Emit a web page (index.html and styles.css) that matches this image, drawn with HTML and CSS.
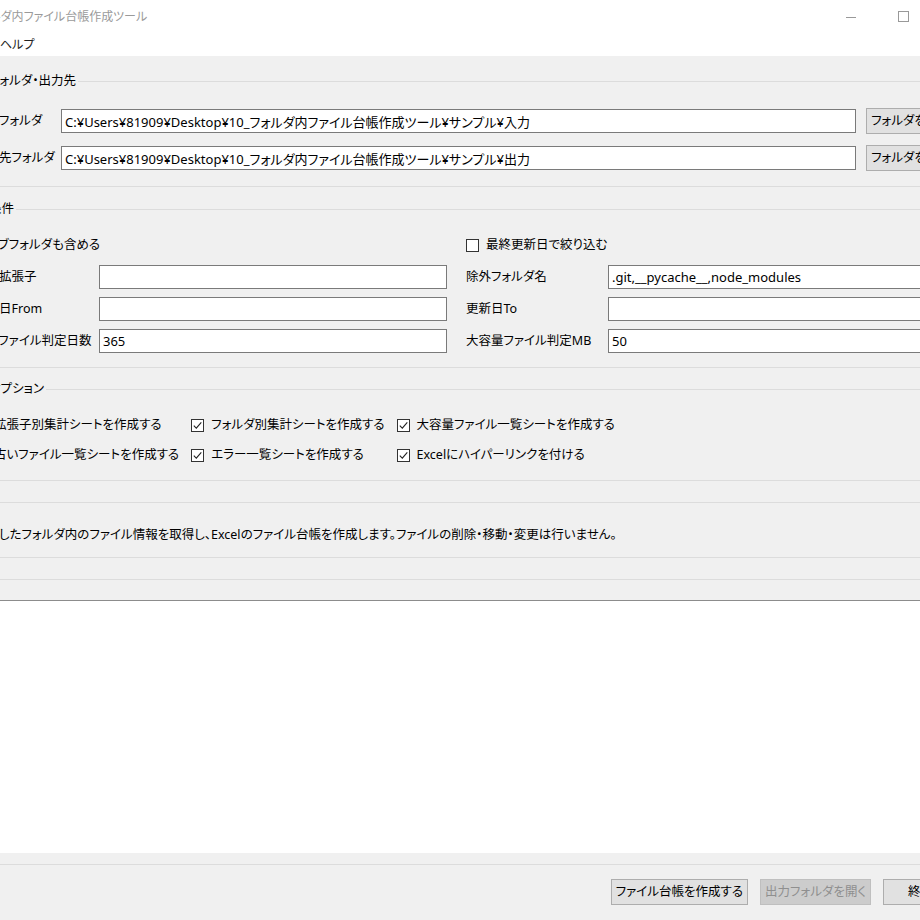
FILE: index.html
```html
<!DOCTYPE html>
<html lang="ja">
<head>
    <meta charset="UTF-8">
    <meta name="viewport" content="width=device-width, initial-scale=1.0">
    <title>フォルダ内ファイル台帳作成ツール</title>
    <link rel="stylesheet" href="styles.css">
</head>
<body>
    <div class="window">
        <header class="titlebar">
            <span class="app-title">フォルダ内ファイル台帳作成ツール</span>
            <div class="win-controls">
                <span class="win-btn">
                    <svg width="10" height="10" viewBox="0 0 10 10"><path d="M0 5.5h10" stroke="#999" stroke-width="1"/></svg>
                </span>
                <span class="win-btn">
                    <svg width="11" height="11" viewBox="0 0 11 11"><rect x="0.5" y="0.5" width="10" height="10" fill="none" stroke="#999" stroke-width="1"/></svg>
                </span>
                <span class="win-btn">
                    <svg width="10" height="10" viewBox="0 0 10 10"><path d="M0 0l10 10M10 0L0 10" stroke="#999" stroke-width="1"/></svg>
                </span>
            </div>
        </header>

        <nav class="menubar">
            <span class="menu-item">ヘルプ</span>
        </nav>

        <main class="client">
            <fieldset class="group folders">
                <legend>入力フォルダ・出力先</legend>
                <div class="folder-grid">
                    <label>入力フォルダ</label>
                    <input class="entry" type="text" value="C:¥Users¥81909¥Desktop¥10_フォルダ内ファイル台帳作成ツール¥サンプル¥入力">
                    <button class="btn">フォルダを選択</button>

                    <label>出力先フォルダ</label>
                    <input class="entry" type="text" value="C:¥Users¥81909¥Desktop¥10_フォルダ内ファイル台帳作成ツール¥サンプル¥出力">
                    <button class="btn">フォルダを選択</button>
                </div>
            </fieldset>

            <fieldset class="group criteria">
                <legend>抽出条件</legend>
                <div class="criteria-grid">
                    <div class="check wide"><span class="box checked"></span>サブフォルダも含める</div>
                    <div class="check right"><span class="box"></span>最終更新日で絞り込む</div>
                    <div class="fill"></div>

                    <label>対象拡張子</label>
                    <input class="entry" type="text" value="">
                    <label class="right">除外フォルダ名</label>
                    <input class="entry" type="text" value=".git,__pycache__,node_modules">

                    <label>更新日From</label>
                    <input class="entry" type="text" value="">
                    <label class="right">更新日To</label>
                    <input class="entry" type="text" value="">

                    <label>古いファイル判定日数</label>
                    <input class="entry" type="text" value="365">
                    <label class="right">大容量ファイル判定MB</label>
                    <input class="entry" type="text" value="50">
                </div>
            </fieldset>

            <fieldset class="group options">
                <legend>出力オプション</legend>
                <div class="options-grid">
                    <div class="check"><span class="box checked"></span>拡張子別集計シートを作成する</div>
                    <div class="check"><span class="box checked"></span>フォルダ別集計シートを作成する</div>
                    <div class="check"><span class="box checked"></span>大容量ファイル一覧シートを作成する</div>
                    <div class="check"><span class="box checked"></span>古いファイル一覧シートを作成する</div>
                    <div class="check"><span class="box checked"></span>エラー一覧シートを作成する</div>
                    <div class="check"><span class="box checked"></span>Excelにハイパーリンクを付ける</div>
                </div>
            </fieldset>

            <fieldset class="group about">
                <legend>説明</legend>
                <p>指定したフォルダ内のファイル情報を取得し、Excelのファイル台帳を作成します。ファイルの削除・移動・変更は行いません。</p>
            </fieldset>

            <fieldset class="group log">
                <legend>ログ</legend>
                <div class="log-text"></div>
            </fieldset>

            <div class="actions">
                <button class="btn">ファイル台帳を作成する</button>
                <button class="btn" disabled>出力フォルダを開く</button>
                <button class="btn">終了</button>
            </div>
        </main>
    </div>

    <script>
        // draw the tick inside every checked box
        document.querySelectorAll('.box.checked').forEach(box => {
            box.innerHTML = '<svg width="11" height="11" viewBox="0 0 11 11"><path d="M1.8 5.6L4.3 8.1L9.3 2.4" fill="none" stroke="#222" stroke-width="1.1"/></svg>';
        });
    </script>
</body>
</html>
```

FILE: styles.css
```css
* {
    margin: 0;
    padding: 0;
    box-sizing: border-box;
}

body {
    background: #fff;
    overflow: hidden;
    font-family: "Noto Sans", "Noto Sans CJK JP", sans-serif;
    font-size: 12.5px;
    line-height: 16px;
    font-feature-settings: "palt";
    color: #000;
}

.window {
    width: 1026px;
    height: 920px;
    margin-left: -48px;
    display: flex;
    flex-direction: column;
}

/* title bar */
.titlebar {
    height: 33px;
    display: flex;
    align-items: center;
    background: #fff;
}

.app-title {
    color: #9a9a9a;
    font-size: 12px;
    padding-left: 18px;
}

.win-controls {
    margin-left: auto;
    margin-right: -3px;
    display: flex;
    height: 100%;
}

.win-btn {
    width: 52px;
    display: flex;
    align-items: center;
    justify-content: center;
}

/* menu */
.menubar {
    height: 23px;
    display: flex;
    align-items: center;
    padding-left: 41px;
    background: #fff;
}

.menu-item {
    padding: 0 7px;
    color: #222;
    font-size: 12px;
}

/* client area */
.client {
    flex: 1;
    background: #f0f0f0;
    padding: 17px 8px 0;
    display: flex;
    flex-direction: column;
}

.group {
    border: 1px solid #dcdcdc;
    padding: 19px 13px 15px;
    margin-bottom: 13px;
    min-width: 0;
}

.group legend {
    margin-left: -10px;
    padding-right: 2px;
    line-height: 16px;
}

.group label {
    white-space: nowrap;
}

.folders {
    margin-bottom: 14px;
}

.folder-grid {
    display: grid;
    grid-template-columns: 77px 1fr 90px;
    column-gap: 10px;
    row-gap: 11px;
    align-items: center;
}

.entry {
    height: 24px;
    width: 100%;
    border: 1px solid #7a7a7a;
    background: #fff;
    padding: 0 3px;
    font: inherit;
    font-size: 13px;
    font-feature-settings: "palt";
    color: #000;
    outline: none;
}

.btn {
    height: 26px;
    padding: 0 4px;
    min-width: 75px;
    border: 1px solid #adadad;
    background: #e1e1e1;
    font: inherit;
    font-feature-settings: "palt";
    color: #000;
    white-space: nowrap;
    overflow: hidden;
    text-align: center;
}

.btn:disabled {
    background: #cccccc;
    border-color: #bfbfbf;
    color: #8f8f8f;
}

/* criteria */
.criteria {
    padding: 16px 13px 14px;
}

.criteria-grid {
    display: grid;
    grid-template-columns: 125px 348px 161px 348px;
    grid-auto-rows: 24px;
    row-gap: 8px;
    align-items: center;
}

.criteria-grid .wide {
    grid-column: span 2;
    margin-left: -8px;
}

.criteria-grid .right {
    padding-left: 19px;
}

.check {
    display: flex;
    align-items: center;
    gap: 7px;
    white-space: nowrap;
}

.box {
    width: 13px;
    height: 13px;
    border: 1px solid #333;
    background: #fff;
    display: inline-flex;
    align-items: center;
    justify-content: center;
    flex-shrink: 0;
}

/* options */
.options {
    padding: 16px 13px 13px;
}

.options-grid {
    display: grid;
    grid-template-columns: repeat(3, auto);
    justify-content: start;
    grid-auto-rows: 24px;
    column-gap: 12px;
    row-gap: 6px;
    align-items: center;
}

/* description */
.about {
    padding: 17px 13px 14px;
}

.about p {
    white-space: nowrap;
}

/* log */
.log {
    padding: 13px 13px 11px;
    margin-bottom: 0;
}

.log-text {
    height: 253px;
    background: #fff;
    border-top: 1px solid #8c8c8c;
}

/* bottom buttons */
.actions {
    display: flex;
    justify-content: flex-end;
    gap: 12px;
    padding: 14px 12px 0;
}
```
